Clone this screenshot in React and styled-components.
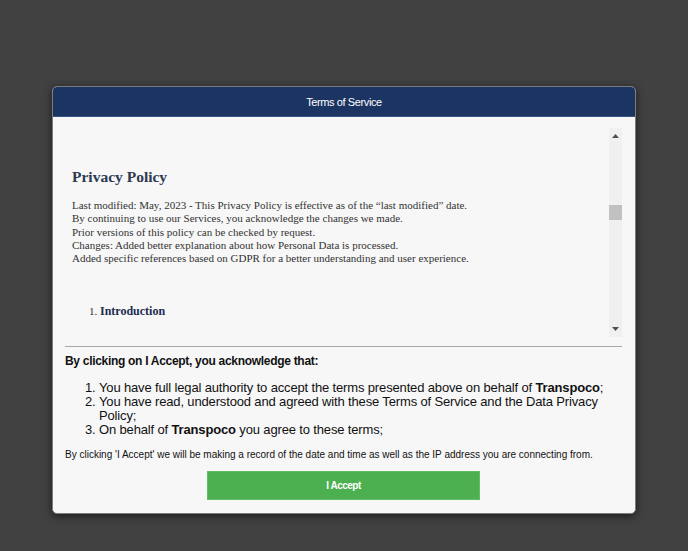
import React from 'react';
import styled, { createGlobalStyle } from 'styled-components';

const GlobalStyle = createGlobalStyle`
  html, body {
    margin: 0;
    padding: 0;
    background: #414141;
  }
  * {
    box-sizing: border-box;
  }
`;

const Arrow = ({ down }) => (
  <svg width="7" height="4" viewBox="0 0 7 4">
    <polygon points={down ? '0,0 7,0 3.5,4' : '3.5,0 7,4 0,4'} fill="#505050" />
  </svg>
);

const TermsModal = () => {
  return (
    <Overlay>
      <Modal>
        <Header>Terms of Service</Header>
        <Body>
          <ScrollArea>
            <Content>
              <DocTitle>Privacy Policy</DocTitle>
              <Para>
                Last modified: May, 2023 - This Privacy Policy is effective as of the “last modified” date.
                <br />
                By continuing to use our Services, you acknowledge the changes we made.
                <br />
                Prior versions of this policy can be checked by request.
                <br />
                Changes: Added better explanation about how Personal Data is processed.
                <br />
                Added specific references based on GDPR for a better understanding and user experience.
              </Para>
              <SectionList>
                <li>
                  <SectionTitle>Introduction</SectionTitle>
                </li>
              </SectionList>
            </Content>

            <Scrollbar>
              <ScrollButton>
                <Arrow />
              </ScrollButton>
              <Track>
                <Thumb />
              </Track>
              <ScrollButton>
                <Arrow down />
              </ScrollButton>
            </Scrollbar>
          </ScrollArea>

          <Divider />

          <AckTitle>By clicking on I Accept, you acknowledge that:</AckTitle>
          <AckList>
            <li>
              You have full legal authority to accept the terms presented above on behalf of <b>Transpoco</b>;
            </li>
            <li>You have read, understood and agreed with these Terms of Service and the Data Privacy Policy;</li>
            <li>
              On behalf of <b>Transpoco</b> you agree to these terms;
            </li>
          </AckList>

          <Notice>
            By clicking 'I Accept' we will be making a record of the date and time as well as the IP address you
            are connecting from.
          </Notice>

          <ButtonRow>
            <AcceptButton type="button">I Accept</AcceptButton>
          </ButtonRow>
        </Body>
      </Modal>
    </Overlay>
  );
};

export default function App() {
  return (
    <>
      <GlobalStyle />
      <TermsModal />
    </>
  );
}

const Overlay = styled.div`
  width: 688px;
  height: 551px;
  background: #414141;
  padding-top: 86px;
  display: flex;
  justify-content: center;
  align-items: flex-start;
`;

const Modal = styled.div`
  width: 584px;
  background: #f7f7f7;
  border-radius: 5px;
  overflow: hidden;
  border: 1px solid #7c7c7c;
  box-shadow: 0 2px 8px rgba(0, 0, 0, 0.6);
`;

const Header = styled.div`
  height: 30px;
  background: #1b3462;
  color: #ffffff;
  font-family: 'Liberation Sans', Arial, sans-serif;
  font-size: 11px;
  letter-spacing: -0.4px;
  display: flex;
  align-items: center;
  justify-content: center;
  border-bottom: 1px solid #3a5282;
`;

const Body = styled.div`
  padding: 11px 13px 13px 12px;
  font-family: 'Liberation Sans', Arial, sans-serif;
  color: #111;
`;

const ScrollArea = styled.div`
  display: flex;
  height: 209px;
`;

const Content = styled.div`
  flex: 1;
  overflow: hidden;
  padding: 40px 0 0 7px;
  font-family: 'Liberation Serif', 'Times New Roman', serif;
  color: #333;
`;

const Scrollbar = styled.div`
  width: 13px;
  display: flex;
  flex-direction: column;
  background: #f0f0f0;
`;

const ScrollButton = styled.div`
  height: 16px;
  display: flex;
  align-items: center;
  justify-content: center;
`;

const Track = styled.div`
  flex: 1;
  padding-top: 61px;
`;

const Thumb = styled.div`
  height: 15px;
  background: #c1c1c1;
`;

const DocTitle = styled.h2`
  margin: 0 0 13px;
  font-size: 15.5px;
  line-height: 18px;
  font-weight: bold;
  color: #2c3a4f;
`;

const Para = styled.p`
  margin: 0;
  font-size: 11px;
  line-height: 13.3px;
  color: #333;
`;

const SectionList = styled.ol`
  margin: 39px 0 0;
  padding-left: 28px;
  font-size: 11px;
  color: #333;
`;

const SectionTitle = styled.strong`
  font-size: 12px;
  line-height: 15px;
  color: #1b2c4f;
`;

const Divider = styled.hr`
  margin: 9px 0 0;
  border: 0;
  border-top: 1px solid #a9a9a9;
  height: 0;
`;

const AckTitle = styled.div`
  margin-top: 7px;
  font-size: 12px;
  line-height: 15px;
  font-weight: bold;
  letter-spacing: -0.3px;
`;

const AckList = styled.ol`
  margin: 12px 0 0;
  padding-left: 34px;
  font-size: 13px;
  line-height: 14px;
  letter-spacing: -0.15px;

  b {
    font-weight: bold;
  }
`;

const Notice = styled.div`
  margin-top: 12px;
  font-size: 10px;
  line-height: 12px;
`;

const ButtonRow = styled.div`
  margin-top: 10px;
  display: flex;
  justify-content: center;
`;

const AcceptButton = styled.button`
  width: 273px;
  height: 29px;
  background: #4caf50;
  border: 1px solid #62bd66;
  color: #ffffff;
  font-family: 'Liberation Sans', Arial, sans-serif;
  font-size: 10px;
  font-weight: bold;
  letter-spacing: -0.5px;
  cursor: pointer;
`;
